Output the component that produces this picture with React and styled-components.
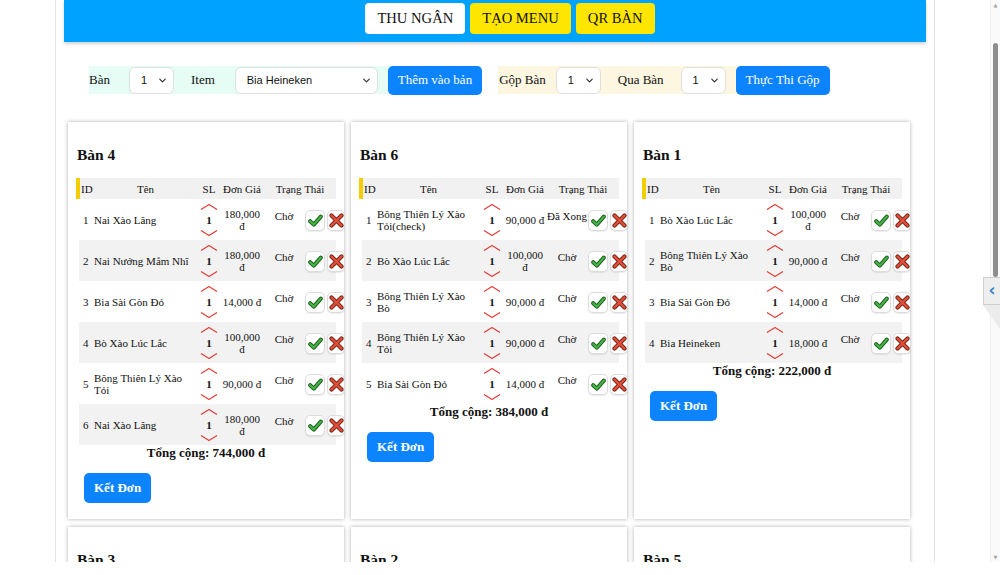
import React from 'react';
import styled, { createGlobalStyle } from 'styled-components';
import { ChevronDown } from 'lucide-react';

const tables = [
	{
		name: 'Bàn 4',
		total: '744,000 đ',
		items: [
			['1', 'Nai Xào Lăng', '180,000 đ', 'Chờ'],
			['2', 'Nai Nướng Mắm Nhĩ', '180,000 đ', 'Chờ'],
			['3', 'Bia Sài Gòn Đỏ', '14,000 đ', 'Chờ'],
			['4', 'Bò Xào Lúc Lắc', '100,000 đ', 'Chờ'],
			['5', 'Bông Thiên Lý Xào Tỏi', '90,000 đ', 'Chờ'],
			['6', 'Nai Xào Lăng', '180,000 đ', 'Chờ'],
		],
	},
	{
		name: 'Bàn 6',
		total: '384,000 đ',
		items: [
			['1', 'Bông Thiên Lý Xào Tỏi(check)', '90,000 đ', 'Đã Xong'],
			['2', 'Bò Xào Lúc Lắc', '100,000 đ', 'Chờ'],
			['3', 'Bông Thiên Lý Xào Bò', '90,000 đ', 'Chờ'],
			['4', 'Bông Thiên Lý Xào Tỏi', '90,000 đ', 'Chờ'],
			['5', 'Bia Sài Gòn Đỏ', '14,000 đ', 'Chờ'],
		],
	},
	{
		name: 'Bàn 1',
		total: '222,000 đ',
		items: [
			['1', 'Bò Xào Lúc Lắc', '100,000 đ', 'Chờ'],
			['2', 'Bông Thiên Lý Xào Bò', '90,000 đ', 'Chờ'],
			['3', 'Bia Sài Gòn Đỏ', '14,000 đ', 'Chờ'],
			['4', 'Bia Heineken', '18,000 đ', 'Chờ'],
		],
	},
	{
		name: 'Bàn 3',
		total: '194,000 đ',
		items: [
			['1', 'Nai Xào Lăng', '180,000 đ', 'Chờ'],
			['2', 'Bia Sài Gòn Đỏ', '14,000 đ', 'Chờ'],
		],
	},
	{
		name: 'Bàn 2',
		total: '90,000 đ',
		items: [['1', 'Bông Thiên Lý Xào Tỏi', '90,000 đ', 'Chờ']],
	},
	{
		name: 'Bàn 5',
		total: '18,000 đ',
		items: [['1', 'Bia Heineken', '18,000 đ', 'Chờ']],
	},
];

const Chevron = ({ down }) => (
	<svg width='18' height='6' viewBox='0 0 18 6'>
		<polyline
			points={down ? '1,0.5 9,5.5 17,0.5' : '1,5.5 9,0.5 17,5.5'}
			fill='none'
			stroke='#e5372f'
			strokeWidth='1.1'
		/>
	</svg>
);

const CheckIcon = () => (
	<svg width='15' height='13' viewBox='0 0 15 13'>
		<path d='M2.2 7.2 L5.8 10.6 L12.8 2.6' fill='none' stroke='#1d5c1d' strokeWidth='4' strokeLinecap='round' strokeLinejoin='round' />
		<path d='M2.2 7.2 L5.8 10.6 L12.8 2.6' fill='none' stroke='#45b545' strokeWidth='2.2' strokeLinecap='round' strokeLinejoin='round' />
	</svg>
);

const CrossIcon = () => (
	<svg width='15' height='15' viewBox='0 0 15 15'>
		<path d='M2.5 2.5 L12.5 12.5 M12.5 2.5 L2.5 12.5' stroke='#7a2418' strokeWidth='4.2' strokeLinecap='round' />
		<path d='M2.5 2.5 L12.5 12.5 M12.5 2.5 L2.5 12.5' stroke='#e0513b' strokeWidth='2.3' strokeLinecap='round' />
	</svg>
);

const TableCard = ({ table }) => (
	<Card>
		<Title>{table.name}</Title>
		<HeadRow>
			<span className='id'>ID</span>
			<span>Tên</span>
			<span>SL</span>
			<span>Đơn Giá</span>
			<span>Trạng Thái</span>
		</HeadRow>
		{table.items.map(([id, name, price, status], i) => (
			<ItemRow key={id} $alt={i % 2 === 1}>
				<IdCell>{id}</IdCell>
				<NameCell>{name}</NameCell>
				<Qty>
					<Chevron />
					<b>1</b>
					<Chevron down />
				</Qty>
				<Price>{price}</Price>
				<Status>{status}</Status>
				<Actions>
					<IconBtn $w={20}>
						<CheckIcon />
					</IconBtn>
					<IconBtn $w={18}>
						<CrossIcon />
					</IconBtn>
				</Actions>
			</ItemRow>
		))}
		<Total>Tổng cộng: {table.total}</Total>
		<CloseBtn>Kết Đơn</CloseBtn>
	</Card>
);

const App = () => {
	return (
		<Frame>
			<GlobalStyle />
			<Page>
				<Container>
					<Header>
						<TopBtn $bg='#ffffff'>THU NGÂN</TopBtn>
						<TopBtn $bg='#ffe600'>TẠO MENU</TopBtn>
						<TopBtn $bg='#ffe600'>QR BÀN</TopBtn>
					</Header>
					<Controls>
						<Group $bg='#e6fdf6'>
							<Label $pl={0} $pr={9}>Bàn</Label>
							<SelectBox $w={45}>
								1 <ChevronDown size={11} strokeWidth={2.6} />
							</SelectBox>
							<Label $pr={10}>Item</Label>
							<SelectBox $w={143}>
								Bia Heineken <ChevronDown size={11} strokeWidth={2.6} />
							</SelectBox>
							<BlueBtn>Thêm vào bản</BlueBtn>
						</Group>
						<Group $bg='#fdf7e2'>
							<Label $pl={1} $pr={0}>Gộp Bàn</Label>
							<SelectBox $w={45}>
								1 <ChevronDown size={11} strokeWidth={2.6} />
							</SelectBox>
							<Label>Qua Bàn</Label>
							<SelectBox $w={45}>
								1 <ChevronDown size={11} strokeWidth={2.6} />
							</SelectBox>
							<BlueBtn>Thực Thi Gộp</BlueBtn>
						</Group>
					</Controls>
					<Grid>
						{tables.map((t) => (
							<TableCard key={t.name} table={t} />
						))}
					</Grid>
				</Container>
			</Page>
			<Scrollbar>
				<Arrow>▲</Arrow>
				<Thumb />
				<Arrow $bottom>▼</Arrow>
			</Scrollbar>
			<SideTab>
				<span>‹</span>
			</SideTab>
		</Frame>
	);
};

const GlobalStyle = createGlobalStyle`
	html, body {
		margin: 0;
		padding: 0;
		background: #fff;
		overflow: hidden;
	}
	body {
		font-family: "Liberation Serif", "Times New Roman", serif;
		color: #111;
	}
	* { box-sizing: border-box; }
`;

const Frame = styled.div`
	position: relative;
	display: flex;
	width: 1000px;
	height: 562px;
	overflow: hidden;
`;

const Page = styled.div`
	flex: 1;
	height: 100%;
	overflow: hidden;
`;

const Container = styled.div`
	width: 880px;
	min-height: 100%;
	margin: 0 auto;
	padding: 0 8px;
	border-left: 1px solid #e4e4e4;
	border-right: 1px solid #e4e4e4;
`;

const Header = styled.header`
	display: flex;
	justify-content: center;
	align-items: flex-start;
	gap: 5px;
	height: 42px;
	padding: 3px 0 0 30px;
	background: #00a2ff;
	box-shadow: 0 2px 3px rgba(0, 0, 0, 0.18);
`;

const TopBtn = styled.button`
	height: 31px;
	padding: 0 12px;
	border: none;
	border-radius: 4px;
	background: ${(p) => p.$bg};
	color: #111;
	font-family: inherit;
	font-size: 14.6px;
`;

const Controls = styled.div`
	display: flex;
	gap: 16px;
	margin: 24px 0 0 25px;
`;

const Group = styled.div`
	display: flex;
	align-items: center;
	gap: 10px;
	height: 28px;
	background: ${(p) => p.$bg};
`;

const Label = styled.span`
	padding: 0 ${(p) => p.$pr ?? 7}px 0 ${(p) => p.$pl ?? 7}px;
	font-size: 13px;
`;

const SelectBox = styled.div`
	display: flex;
	align-items: center;
	justify-content: space-between;
	width: ${(p) => p.$w}px;
	height: 27px;
	padding: 0 5px 0 11px;
	background: #fff;
	border: 1px solid #dedede;
	border-radius: 6px;
	font-family: "Liberation Sans", Arial, sans-serif;
	font-size: 11px;
	color: #111;
	svg {
		color: #333;
	}
`;

const BlueBtn = styled.button`
	height: 29px;
	padding: 0 10px;
	border: none;
	border-radius: 5px;
	background: #0c84ff;
	color: #fff;
	font-family: inherit;
	font-size: 13px;
`;

const Grid = styled.div`
	display: grid;
	grid-template-columns: repeat(3, 1fr);
	gap: 8px 7px;
	width: 841px;
	margin: 28px 0 0 4px;
	padding-bottom: 20px;
`;

const Card = styled.div`
	display: flex;
	flex-direction: column;
	padding: 0 8px 16px;
	background: #fff;
	box-shadow: 0 0 4px rgba(0, 0, 0, 0.32);
`;

const Title = styled.h3`
	margin: 24px 1px 15px;
	font-size: 15.5px;
	line-height: 17px;
	font-weight: bold;
`;

const HeadRow = styled.div`
	display: grid;
	grid-template-columns: 13px 105px 22px 44px 1fr;
	align-items: center;
	height: 21px;
	border-left: 4px solid #f4cd00;
	background: #f1f1f1;
	font-size: 11px;
	text-align: center;

	.id {
		text-align: left;
		padding-left: 1px;
	}
`;

const ItemRow = styled.div`
	display: grid;
	grid-template-columns: 14px 105px 22px 44px 40px 42px;
	align-items: center;
	width: 257px;
	height: 41px;
	margin-left: 3px;
	background: ${(p) => (p.$alt ? '#f2f2f2' : 'transparent')};
	font-size: 11px;
	line-height: 12px;
`;

const IdCell = styled.span`
	padding-left: 4px;
`;

const NameCell = styled.span`
	padding: 0 4px 0 1px;
`;

const Qty = styled.div`
	display: flex;
	flex-direction: column;
	align-items: center;
	gap: 4px;

	b {
		font-size: 11px;
		line-height: 12px;
	}
`;

const Price = styled.span`
	padding: 0 1px;
	text-align: center;
`;

const Status = styled.span`
	padding-bottom: 7px;
	text-align: center;
	white-space: nowrap;
`;

const Actions = styled.div`
	display: flex;
	align-items: center;
	gap: 2px;
	padding-left: 1px;
	margin-top: 2px;
`;

const IconBtn = styled.button`
	display: flex;
	align-items: center;
	justify-content: center;
	width: ${(p) => p.$w}px;
	height: 21px;
	padding: 0;
	background: #fff;
	border: 1px solid #dcdcdc;
	border-radius: 5px;
	box-shadow: 0 1px 1px rgba(0, 0, 0, 0.08);
`;

const Total = styled.div`
	font-size: 13px;
	line-height: 15px;
	font-weight: bold;
	text-align: center;
`;

const CloseBtn = styled.button`
	align-self: flex-start;
	height: 30px;
	margin: 13px 0 0 8px;
	padding: 0 10px;
	border: none;
	border-radius: 5px;
	background: #0c84ff;
	color: #fff;
	font-family: inherit;
	font-size: 13px;
	font-weight: bold;
`;

const Scrollbar = styled.div`
	display: flex;
	flex-direction: column;
	align-items: center;
	width: 10px;
	height: 100%;
	background: #fafafa;
	border-left: 1px solid #f0f0f0;
`;

const Arrow = styled.span`
	margin-top: ${(p) => (p.$bottom ? 'auto' : '2px')};
	margin-bottom: ${(p) => (p.$bottom ? '2px' : '0')};
	font-size: 5px;
	line-height: 6px;
	color: #a3a3a3;
	font-family: "DejaVu Sans", sans-serif;
`;

const Thumb = styled.div`
	width: 5px;
	height: 234px;
	margin-top: 35px;
	border-radius: 3px;
	background: #8e8e8e;
`;

const SideTab = styled.div`
	position: absolute;
	top: 277px;
	right: 0;
	width: 17px;
	height: 28px;
	display: flex;
	align-items: center;
	justify-content: center;
	background: #eeeeee;
	border: 1px solid #cfcfcf;
	border-right: none;

	span {
		font-family: "DejaVu Sans", sans-serif;
		font-size: 17px;
		font-weight: bold;
		color: #2f7fcf;
		line-height: 1;
		margin-top: -2px;
	}

	&::after {
		content: '';
		position: absolute;
		top: 27px;
		right: 0;
		border-top: 24px solid #ececec;
		border-left: 17px solid transparent;
	}
`;

export default App;
